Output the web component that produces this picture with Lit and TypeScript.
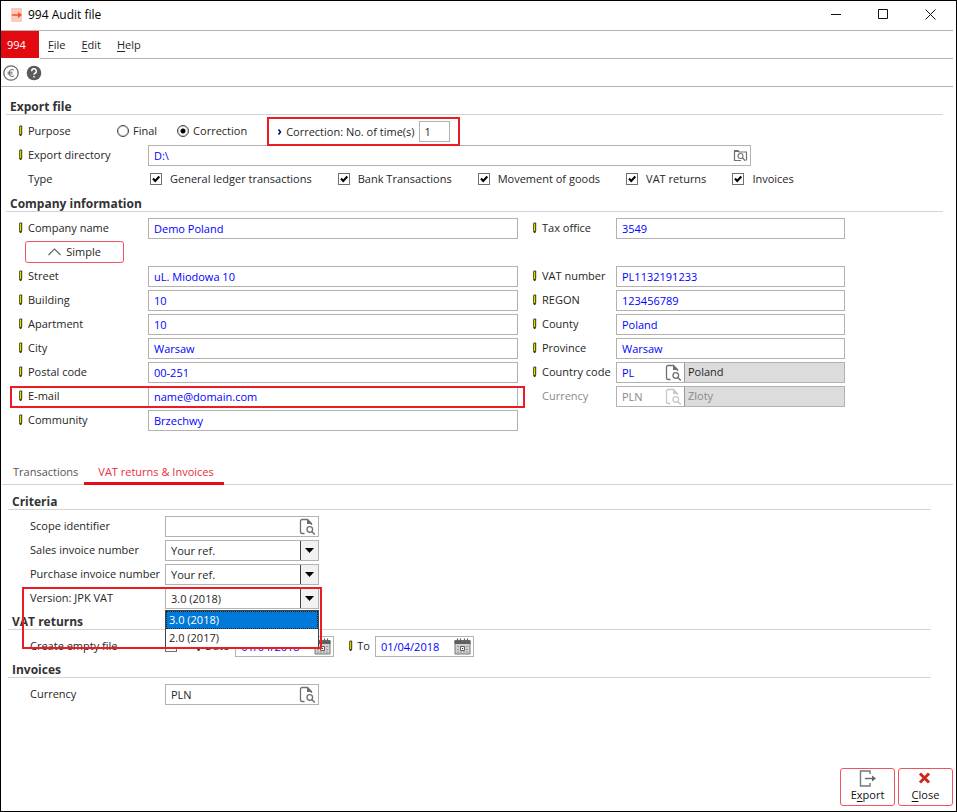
import { LitElement, html, css, nothing } from "lit";
import { customElement, state } from "lit/decorators.js";
import { classMap } from "lit/directives/class-map.js";

const pencil = html`<svg class="pencil" viewBox="0 0 5 12" width="5" height="12" aria-hidden="true">
  <path d="M1 1.500 2 .5h1.500l.7 1V9L3.200 11H2L1 9z" fill="#3a3a18" />
  <path d="M1.700 1.500h1.500V9H1.700z" fill="#dcd800" />
</svg>`;

const docSearch = html`<svg viewBox="0 0 17 18" width="17" height="18" aria-hidden="true">
  <path d="M5.500 15.500H3.200Q1.500 15.500 1.500 13.800V3.200Q1.500 1.500 3.200 1.500H8.500L12.500 5.500V7" fill="none" stroke="currentColor" stroke-width="1.300" />
  <path d="M8 1 13 6H8z" fill="currentColor" />
  <circle cx="10.800" cy="11.500" r="2.800" fill="none" stroke="currentColor" stroke-width="1.300" />
  <path d="m12.800 13.500 3 3" stroke="currentColor" stroke-width="1.500" />
</svg>`;

const folderSearch = html`<svg viewBox="0 0 15 13" width="15" height="13" aria-hidden="true">
  <path d="M8 11.500H1.500V1.500H5l1 1.500h7.500v8.500" fill="none" stroke="currentColor" stroke-width="1.200" />
  <path d="M1 1h4l1.500 2H1z" fill="currentColor" />
  <circle cx="7.500" cy="7" r="2.500" fill="none" stroke="currentColor" stroke-width="1.100" />
  <path d="m9.300 8.800 3 3" stroke="currentColor" stroke-width="1.300" />
</svg>`;

const calendar = html`<svg viewBox="0 0 17 17" width="17" height="17" aria-hidden="true">
  <path d="M1 2.500h15V16H1z" fill="#d0d0d0" stroke="#777" />
  <path d="M.5 2.500h16V6H.5z" fill="#606060" />
  <path d="M3.500.5v3M6.500.5v3M10.500.5v3M13.500.5v3" stroke="#606060" stroke-width="1.200" />
  <path d="M3 8.500h11M3 11.500h11M3 14h11" stroke="#999" stroke-dasharray="2 1" />
  <path d="M6.500 8.500h4v4h-4z" fill="#eee" stroke="#606060" />
  <path d="M8 10h1v1H8z" fill="#333" />
</svg>`;

interface Row {
  id: string;
  label: string;
  value: string;
}

const leftRows: (Row | null)[] = [
  { id: "company", label: "Company name", value: "Demo Poland" },
  null,
  { id: "street", label: "Street", value: "uL. Miodowa 10" },
  { id: "building", label: "Building", value: "10" },
  { id: "apartment", label: "Apartment", value: "10" },
  { id: "city", label: "City", value: "Warsaw" },
  { id: "postal", label: "Postal code", value: "00-251" },
  { id: "email", label: "E-mail", value: "name@domain.com" },
  { id: "community", label: "Community", value: "Brzechwy" },
];

const rightRows: (Row | null)[] = [
  { id: "tax", label: "Tax office", value: "3549" },
  null,
  { id: "vat", label: "VAT number", value: "PL1132191233" },
  { id: "regon", label: "REGON", value: "123456789" },
  { id: "county", label: "County", value: "Poland" },
  { id: "province", label: "Province", value: "Warsaw" },
];

const types = ["General ledger transactions", "Bank Transactions", "Movement of goods", "VAT returns", "Invoices"];
const versions = ["3.0 (2018)", "2.0 (2017)"];

@customElement("app-root")
export class AppRoot extends LitElement {
  @state() private version = versions[0];
  @state() private listOpen = true;

  static styles = css`
    :host {
      display: block;
      font: 11px/14px "Open Sans", "Noto Sans", sans-serif;
      color: #262626;
    }
    * {
      box-sizing: border-box;
    }
    .window {
      display: flex;
      flex-direction: column;
      min-height: 100vh;
      border: 1px solid #000;
      background: #fff;
    }
    button,
    input,
    select {
      font: inherit;
      color: inherit;
      margin: 0;
      padding: 0;
      border: 0;
      background: none;
      border-radius: 0;
    }
    svg {
      display: block;
      flex: none;
    }
    u {
      text-underline-offset: 2px;
    }
    .titlebar {
      display: flex;
      align-items: center;
      height: 30px;
      margin-right: 3px;
      padding: 0 17px 2px 9px;
      gap: 5px;
      border-bottom: 1px solid #b4b4b4;
    }
    .title {
      flex: 1;
      margin: 0;
      font-size: 12px;
      line-height: 16px;
      font-weight: 400;
      color: #000;
    }
    .controls {
      display: flex;
      gap: 36px;
      color: #111;
    }
    .menubar {
      display: flex;
      height: 28px;
      margin-right: 3px;
    }
    .code {
      width: 38px;
      padding: 7px 6px;
      background: #e20a10;
      color: #fff;
      border-bottom: 1px solid #fff;
    }
    .menus {
      flex: 1;
      display: flex;
      align-items: center;
      gap: 16px;
      margin-left: 1px;
      padding-left: 8px;
      border-bottom: 1px solid #b4b4b4;
    }
    .toolbar {
      display: flex;
      align-items: center;
      gap: 7px;
      height: 28px;
      margin-right: 3px;
      padding-left: 2px;
      border-bottom: 1px solid #b4b4b4;
    }
    h2 {
      height: 20px;
      margin: 0 0 4px;
      padding: 5px 4px 0;
      font-size: 12px;
      line-height: 14px;
      font-weight: 700;
      color: #333;
      border-bottom: 1px solid #d4d4d4;
    }
    .export {
      margin: 8px 13px 0 5px;
    }
    .company {
      margin: 1px 13px 0 5px;
    }
    .row,
    .pair {
      display: grid;
      grid-template-columns: 142px minmax(0, 1fr);
    }
    .row {
      height: 24px;
    }
    .pair {
      grid-template-columns: 142px minmax(0, 370fr) 98px minmax(0, 229fr);
      grid-template-rows: repeat(9, 24px);
      padding-right: 98px;
    }
    .label {
      display: flex;
      align-items: center;
      gap: 5px;
      padding-left: 12px;
      white-space: nowrap;
    }
    .label.plain {
      padding-left: 22px;
    }
    .field {
      display: flex;
      align-items: center;
      align-self: end;
      height: 21px;
      margin-bottom: 1px;
      border: 1px solid #b2b2b2;
      background: #fff;
    }
    .field input {
      flex: 1;
      min-width: 0;
      height: 18px;
      padding: 0 0 0 5px;
      color: #0000ff;
      outline: none;
    }
    .field .dark {
      color: #262626;
    }
    .icon {
      color: #707070;
      padding-right: 2px;
    }
    .directory {
      max-width: 603px;
    }
    .small {
      width: 31px;
    }
    .line {
      display: flex;
      align-items: center;
      white-space: nowrap;
    }
    .choice {
      display: flex;
      align-items: center;
      gap: 4px;
    }
    input[type="radio"] {
      appearance: none;
      width: 12px;
      height: 12px;
      border: 1px solid #444;
      border-radius: 50%;
      box-shadow: 0 0 0 1px #ccc inset;
    }
    input[type="radio"]:checked {
      background: radial-gradient(circle, #000 0 2px, #fff 3px);
    }
    .purpose-row {
      display: flex;
      height: 24px;
    }
    .purpose-label {
      width: 66px;
    }
    .radios {
      display: flex;
      flex: none;
      padding-left: 45px;
      gap: 20px;
    }
    .marked {
      display: flex;
      align-items: center;
      flex: none;
      height: 29px;
      margin: -2px 0 -3px 20px;
      padding: 0 8px;
      border: 2px solid #ed1c24;
      position: relative;
      z-index: 1;
    }
    .marked .field {
      align-self: center;
      margin: 0 0 0 4px;
    }
    .types {
      gap: 26px;
      padding-left: 2px;
    }
    .types .choice {
      gap: 8px;
    }
    .tick {
      display: grid;
      width: 12px;
      height: 12px;
    }
    .tick > * {
      grid-area: 1 / 1;
    }
    .tick svg {
      pointer-events: none;
      visibility: hidden;
    }
    .tick input:checked + svg {
      visibility: visible;
    }
    input[type="checkbox"] {
      appearance: none;
      width: 12px;
      height: 12px;
      border: 1px solid #707070;
      background: #fff;
    }
    .simple {
      display: flex;
      align-items: center;
      justify-content: center;
      gap: 5px;
      width: 99px;
      height: 22px;
      margin: 1px 0 0 19px;
      border: 1px solid #ee5560;
      border-radius: 3px;
    }
    .mark {
      margin: 2px -7px 0 4px;
      border: 2px solid #ed1c24;
      z-index: 1;
      pointer-events: none;
    }
    .right {
      padding-left: 14px;
    }
    .right.plain {
      padding-left: 24px;
    }
    .off,
    .off input,
    .off .dark {
      color: #8a8a8a;
    }
    .off .icon {
      color: #c8c8c8;
    }
    .coded input {
      flex: 0 1 48px;
    }
    .coded .name {
      flex: 1;
      align-self: stretch;
      padding: 2px 3px;
      border-left: 1px solid #999;
      background: #dcdcdc;
    }
    .tabs {
      display: flex;
      align-items: flex-end;
      height: 25px;
      margin: 28px 3px 0 1px;
      border-bottom: 1px solid #d4d4d4;
    }
    .tab {
      padding: 0 6px 5px 11px;
      color: #555;
    }
    .tab.active {
      padding: 0 10px 3px 14px;
      margin-bottom: -1px;
      border-bottom: 3px solid #e30b1c;
      color: #e5303c;
    }
    .criteria {
      margin: 5px 25px 0 7px;
    }
    .criteria .row {
      grid-template-columns: 157px minmax(0, 154px) auto 1fr;
    }
    .select {
      display: grid;
      grid-template-columns: 1fr 18px;
    }
    .select select {
      grid-area: 1 / 1 / 2 / 3;
      appearance: none;
      height: 18px;
      padding-left: 5px;
      outline: none;
    }
    .drop {
      grid-area: 1 / 2;
      display: grid;
      place-items: center;
      height: 19px;
      border-left: 1px solid #444;
      background: #f2f2f2;
      pointer-events: none;
    }
    .version {
      position: relative;
    }
    .list {
      position: absolute;
      z-index: 2;
      top: 24px;
      left: 157px;
      width: 154px;
      margin: 0;
      padding: 0;
      border: 1px solid #444;
      background: #fff;
    }
    .option {
      display: block;
      width: 100%;
      height: 18px;
      padding: 0 3px;
      text-align: left;
    }
    .option.current {
      background: #0078d7;
      color: #fff;
      outline: 1px dotted #222;
      outline-offset: -1px;
    }
    .version-mark {
      position: absolute;
      z-index: 3;
      top: 1px;
      left: 14px;
      width: 300px;
      height: 62px;
      border: 2px solid #ed1c24;
      pointer-events: none;
    }
    .criteria .dates {
      display: flex;
      align-items: center;
    }
    .dates .label-cell {
      width: 157px;
      padding-left: 22px;
      flex: none;
    }
    .date-label {
      display: flex;
      align-items: center;
      gap: 4px;
      padding: 0 6px 0 19px;
    }
    .to {
      padding: 0 5px 0 14px;
    }
    .date {
      width: 99px;
    }
    .footer {
      display: flex;
      justify-content: flex-end;
      gap: 3px;
      margin-top: auto;
      padding: 0 3px 5px;
    }
    .action {
      display: flex;
      flex-direction: column;
      align-items: center;
      justify-content: space-between;
      width: 55px;
      height: 38px;
      padding: 1px 0 3px;
      border: 1px solid #ee5560;
      border-radius: 3px;
      color: #111;
    }
  `;

  private tick(label: string, checked: boolean, text = true) {
    return html`<label class="choice">
      <span class="tick">
        <input type="checkbox" aria-label=${label} .checked=${checked} />
        <svg viewBox="0 0 12 12" width="12" height="12"><path d="m3 5.500 2.200 2.500L9.300 3.500" fill="none" stroke="#000" stroke-width="2" /></svg>
      </span>
      ${text ? label : nothing}
    </label>`;
  }

  private select(id: string, value: string, options: string[]) {
    return html`<div class="field select">
      <select id=${id} .value=${value} @mousedown=${id === "version" ? this.toggle : nothing}>
        ${options.map((o) => html`<option ?selected=${o === value}>${o}</option>`)}
      </select>
      <span class="drop"><svg viewBox="0 0 9 5" width="9" height="5"><path d="M0 0h9L4.500 5z" fill="#000" /></svg></span>
    </div>`;
  }

  private toggle = (e: Event) => {
    e.preventDefault();
    this.listOpen = !this.listOpen;
  };

  private pick(v: string) {
    this.version = v;
    this.listOpen = false;
  }

  private cells(rows: (Row | null)[], right: boolean) {
    return rows.map((r, i) =>
      r
        ? html`<label class=${classMap({ label: true, right })} for=${r.id} style="grid-area:${i + 1}/${right ? 3 : 1}">${pencil}${r.label}</label>
            <div class="field" style="grid-area:${i + 1}/${right ? 4 : 2}"><input id=${r.id} type="text" .value=${r.value} /></div>`
        : nothing
    );
  }

  private coded(row: number, id: string, label: string, code: string, name: string, off: boolean) {
    return html`<label class=${classMap({ label: true, right: true, plain: off, off })} for=${id} style="grid-area:${row}/3">${off ? nothing : pencil}${label}</label>
      <div class=${classMap({ field: true, coded: true, off })} style="grid-area:${row}/4">
        <input id=${id} type="text" class=${off ? "dark" : ""} .value=${code} ?disabled=${off} />
        <button class="icon" ?disabled=${off} aria-label="Search ${label}">${docSearch}</button>
        <span class="name">${name}</span>
      </div>`;
  }

  private date(id: string) {
    return html`<div class="field date"><input id=${id} type="text" value="01/04/2018" /><button class="icon" aria-label="Pick a date">${calendar}</button></div>`;
  }

  render() {
    return html`<div class="window">
      <header class="titlebar">
        <svg viewBox="0 0 13 14" width="13" height="14" aria-hidden="true">
          <rect x="1" width="11" height="14" rx="1" fill="#fbc9bd" />
          <path d="M2 7h7" stroke="#f4511e" stroke-width="1.500" /><path d="m8 4 4 3-4 3z" fill="#f4511e" />
        </svg>
        <h1 class="title">994 Audit file</h1>
        <div class="controls">
          <button aria-label="Minimize"><svg viewBox="0 0 11 11" width="11" height="11"><path d="M0 5.500h10" stroke="currentColor" /></svg></button>
          <button aria-label="Maximize"><svg viewBox="0 0 11 11" width="11" height="11"><path d="M.5.5h9v9h-9z" fill="none" stroke="currentColor" /></svg></button>
          <button aria-label="Close window"><svg viewBox="0 0 11 11" width="11" height="11"><path d="m.5.5 10 10m0-10-10 10" stroke="currentColor" /></svg></button>
        </div>
      </header>
      <nav class="menubar">
        <div class="code">994</div>
        <div class="menus">
          <button><u>F</u>ile</button><button><u>E</u>dit</button><button><u>H</u>elp</button>
        </div>
      </nav>
      <div class="toolbar">
        <button aria-label="Currency"><svg viewBox="0 0 16 16" width="16" height="16">
          <circle cx="8" cy="8" r="7.200" fill="none" stroke="#6a6a6a" stroke-width="1.300" />
          <path d="M11 5.200Q10 4.500 9 4.500Q6 4.700 6 8T9 11.500Q10 11.500 11 10.800M4.500 7.200h5M4.500 8.900h5" fill="none" stroke="#6a6a6a" />
        </svg></button>
        <button aria-label="Help"><svg viewBox="0 0 16 16" width="16" height="16">
          <circle cx="8" cy="8" r="7.300" fill="#5a5a5a" />
          <path d="M5.700 6.200a2.300 2.300 0 1 1 3.300 2Q8 8.700 8 9.800M8 11v1.600" fill="none" stroke="#fff" stroke-width="1.500" />
        </svg></button>
      </div>

      <section class="export">
        <h2>Export file</h2>
        <div class="purpose-row">
          <span class="label purpose-label">${pencil}Purpose</span>
          <div class="radios" role="radiogroup" aria-label="Purpose">
            <label class="choice"><input type="radio" name="purpose" />Final</label>
            <label class="choice"><input type="radio" name="purpose" checked />Correction</label>
          </div>
          <label class="marked">
            <svg viewBox="0 0 9 8" width="9" height="8"><path d="m1.500 1.500 2 2.500-2 2.500" fill="none" stroke="#00008b" stroke-width="1.500" /></svg>
            Correction: No. of time(s)
            <span class="field small"><input class="dark" type="text" value="1" /></span>
          </label>
        </div>
        <div class="row">
          <label class="label" for="dir">${pencil}Export directory</label>
          <div class="field directory"><input id="dir" type="text" value="D:\\" /><button class="icon" aria-label="Browse">${folderSearch}</button></div>
        </div>
        <div class="row">
          <span class="label plain">Type</span>
          <div class="line types">${types.map((t) => this.tick(t, true))}</div>
        </div>
      </section>

      <section class="company">
        <h2>Company information</h2>
        <div class="pair">
          ${this.cells(leftRows, false)}
          <button class="simple" style="grid-area:2/1">
            <svg viewBox="0 0 13 8" width="13" height="8"><path d="M.5 7 6.500 1l6 6" fill="none" stroke="#666" stroke-width="1.200" /></svg>Simple
          </button>
          ${this.cells(rightRows, true)} ${this.coded(7, "country", "Country code", "PL", "Poland", false)}
          ${this.coded(8, "currency", "Currency", "PLN", "Zloty", true)}
          <span class="mark" style="grid-area:8/1/9/3"></span>
        </div>
      </section>

      <div class="tabs" role="tablist">
        <button class="tab" role="tab" aria-selected="false">Transactions</button>
        <button class="tab active" role="tab" aria-selected="true">VAT returns &amp; Invoices</button>
      </div>

      <section class="criteria">
        <h2>Criteria</h2>
        <div class="row">
          <label class="label plain" for="scope">Scope identifier</label>
          <div class="field"><input id="scope" type="text" /><button class="icon" aria-label="Search scope">${docSearch}</button></div>
        </div>
        <div class="row">
          <label class="label plain" for="sales">Sales invoice number</label>${this.select("sales", "Your ref.", ["Your ref."])}
        </div>
        <div class="row">
          <label class="label plain" for="purchase">Purchase invoice number</label>${this.select("purchase", "Your ref.", ["Your ref."])}
        </div>
        <div class="row version">
          <label class="label plain" for="version">Version: JPK VAT</label>${this.select("version", this.version, versions)}
          ${this.listOpen
            ? html`<div class="list" role="listbox" aria-label="Version: JPK VAT">
                ${versions.map(
                  (v) => html`<button role="option" aria-selected=${v === this.version} class=${classMap({ option: true, current: v === this.version })} @click=${() => this.pick(v)}>${v}</button>`
                )}
              </div>`
            : nothing}
          <span class="version-mark"></span>
        </div>
        <h2>VAT returns</h2>
        <div class="row dates">
          <span class="label-cell">Create empty file</span>
          ${this.tick("Create empty file", false, false)}
          <label class="date-label" for="from">${pencil}Date</label>${this.date("from")}
          <label class="date-label to" for="until">${pencil}To</label>${this.date("until")}
        </div>
        <h2>Invoices</h2>
        <div class="row">
          <label class="label plain" for="invcur">Currency</label>
          <div class="field"><input id="invcur" class="dark" type="text" value="PLN" /><button class="icon" aria-label="Search currency">${docSearch}</button></div>
        </div>
      </section>

      <footer class="footer">
        <button class="action">
          <svg viewBox="0 0 18 17" width="18" height="17"><path d="M11 4V1H1.500v15H11v-3" fill="none" stroke="#777" stroke-width="1.400" /><path d="M6 8.500h9" stroke="#666" stroke-width="1.400" /><path d="m13 5.500 4 3-4 3z" fill="#666" /></svg>
          <span>E<u>x</u>port</span>
        </button>
        <button class="action">
          <svg viewBox="0 0 18 17" width="18" height="17"><path d="m3 3.500 9 9m0-9-9 9" stroke="#c92a1e" stroke-width="3" /></svg>
          <span><u>C</u>lose</span>
        </button>
      </footer>
    </div>`;
  }
}
